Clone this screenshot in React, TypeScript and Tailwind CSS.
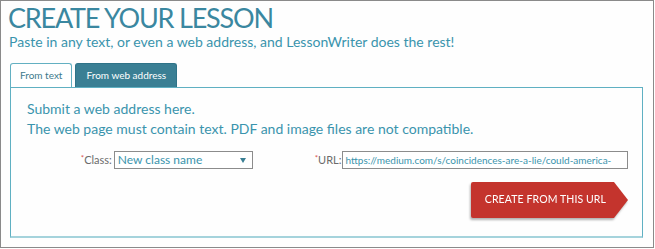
import React from 'react';

const App: React.FC = () => {
  return (
    <div className="w-[655px] h-[249px] bg-white">
      <div
        className="w-[654px] h-[248px] border border-[#8a8a8a] bg-[#fefefe] px-[9px] pt-[1px]"
        style={{ fontFamily: 'Lato, "Open Sans", sans-serif' }}
      >
        {/* Heading */}
        <h1 className="-ml-[2px] text-[27px] leading-[32px] font-normal tracking-[-1.2px] text-[#3a87a0]">
          CREATE YOUR LESSON
        </h1>
        <p className="-ml-[1px] text-[14px] leading-[18px] text-[#3a94ad] mt-[-1px]">
          Paste in any text, or even a web address, and LessonWriter does the rest!
        </p>

        {/* Tabs */}
        <div className="mt-[12px] flex items-end gap-[3px]">
          <button className="h-[24px] px-[9px] border border-b-0 border-[#63b0c2] rounded-t-[3px] bg-white text-[10px] text-[#3d7a8c]">
            From text
          </button>
          <button className="h-[24px] px-[10px] border border-b-0 border-[#2f7388] rounded-t-[3px] bg-[#3a7f94] text-[10px] text-white">
            From web address
          </button>
        </div>

        {/* Panel */}
        <div className="w-[633px] h-[151px] border border-[#5fb0c2] border-b-[#a5d3dc] border-b-2 pl-[16px] pr-[14px] pt-[11px]">
          <p className="text-[14px] leading-[20px] text-[#3a94ad]">Submit a web address here.</p>
          <p className="text-[14px] leading-[20px] text-[#3a94ad]">
            The web page must contain text. PDF and image files are not compatible.
          </p>

          <div className="mt-[12px] flex items-center">
            <label className="w-[87px] text-right pr-[2px] text-[11px] text-[#6b6b6b]">
              <span className="text-[#d9534f] text-[8px] align-top">*</span>Class:
            </label>
            <div className="w-[139px] h-[18px] border border-[#8c8c8c] bg-white flex items-center justify-between px-[3px]">
              <span className="text-[12px] text-[#3a94ad]">New class name</span>
              <svg width="6" height="5" viewBox="0 0 6 5" className="mr-[3px]">
                <path d="M0 0 L6 0 L3 5 Z" fill="#3a7f94" />
              </svg>
            </div>
            <label className="w-[90px] text-right pr-[1px] text-[11px] text-[#6b6b6b]">
              <span className="text-[#d9534f] text-[8px] align-top">*</span>URL:
            </label>
            <div className="w-[286px] h-[18px] border border-[#8c8c8c] bg-white flex items-center px-[2px] overflow-hidden">
              <span className="text-[10px] text-[#3a94ad] whitespace-nowrap">
                https://medium.com/s/coincidences-are-a-lie/could-america-
              </span>
            </div>
          </div>

          <div className="mt-[13px] flex justify-end">
            <div className="h-[36px] flex drop-shadow-[-1px_2px_1px_rgba(0,0,0,0.3)]">
              <div className="h-[36px] bg-[#c4342d] rounded-l-[2px] pl-[14px] pr-[4px] flex items-center text-[10.5px] text-white tracking-[0.1px]">
                CREATE FROM THIS URL
              </div>
              <svg width="19" height="36" viewBox="0 0 19 36" className="-ml-px">
                <path d="M0 0 L5 0 L19 18 L5 36 L0 36 Z" fill="#c4342d" />
              </svg>
            </div>
          </div>
        </div>
      </div>
    </div>
  );
};

export default App;
